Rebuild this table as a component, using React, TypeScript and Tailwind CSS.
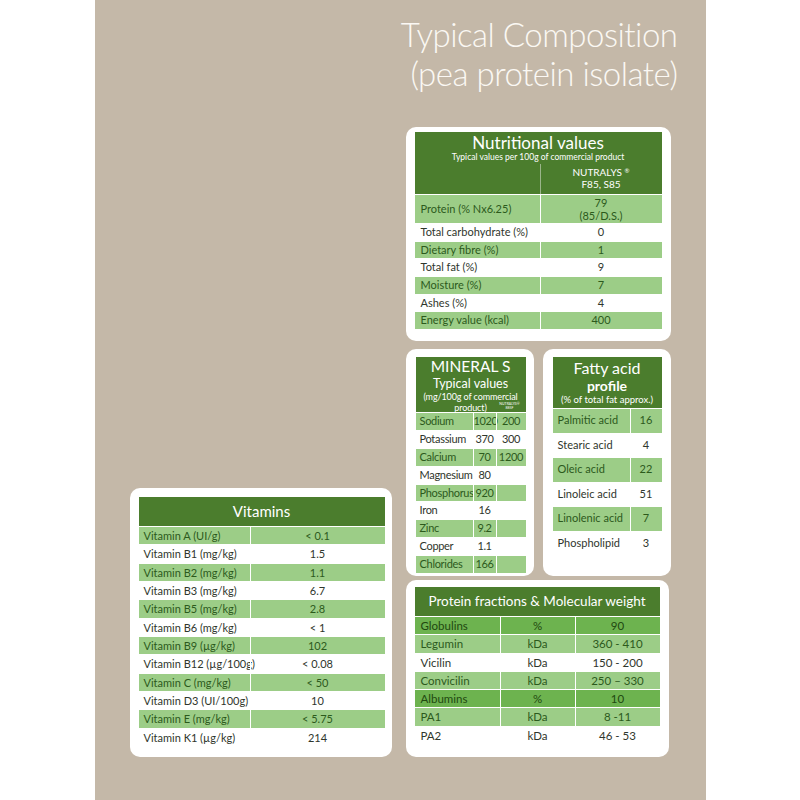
import type { ReactNode } from "react";

const font = { fontFamily: "Lato, 'Open Sans', sans-serif" };

type Shade = "light" | "mid" | "white";

const rowBg: Record<Shade, string> = {
  light: "bg-[#9ccd87] text-[#2c5a1c]",
  mid: "bg-[#6db34f] text-[#21480f]",
  white: "bg-white text-[#2f362c]",
};

const nutrition: [string, string, Shade][] = [
  ["Total carbohydrate (%)", "0", "white"],
  ["Dietary fibre (%)", "1", "light"],
  ["Total fat (%)", "9", "white"],
  ["Moisture (%)", "7", "light"],
  ["Ashes (%)", "4", "white"],
  ["Energy value (kcal)", "400", "light"],
];

const minerals: [string, string, string, Shade][] = [
  ["Sodium", "1020", "200", "light"],
  ["Potassium", "370", "300", "white"],
  ["Calcium", "70", "1200", "light"],
  ["Magnesium", "80", "", "white"],
  ["Phosphorus", "920", "", "light"],
  ["Iron", "16", "", "white"],
  ["Zinc", "9.2", "", "light"],
  ["Copper", "1.1", "", "white"],
  ["Chlorides", "166", "", "light"],
];

const fatty: [string, string, Shade][] = [
  ["Palmitic acid", "16", "light"],
  ["Stearic acid", "4", "white"],
  ["Oleic acid", "22", "light"],
  ["Linoleic acid", "51", "white"],
  ["Linolenic acid", "7", "light"],
  ["Phospholipid", "3", "white"],
];

const vitamins: [string, string, Shade][] = [
  ["Vitamin A (UI/g)", "< 0.1", "light"],
  ["Vitamin B1 (mg/kg)", "1.5", "white"],
  ["Vitamin B2 (mg/kg)", "1.1", "light"],
  ["Vitamin B3 (mg/kg)", "6.7", "white"],
  ["Vitamin B5 (mg/kg)", "2.8", "light"],
  ["Vitamin B6 (mg/kg)", "< 1", "white"],
  ["Vitamin B9 (µg/kg)", "102", "light"],
  ["Vitamin B12 (µg/100g)", "< 0.08", "white"],
  ["Vitamin C (mg/kg)", "< 50", "light"],
  ["Vitamin D3 (UI/100g)", "10", "white"],
  ["Vitamin E (mg/kg)", "< 5.75", "light"],
  ["Vitamin K1 (µg/kg)", "214", "white"],
];

const fractions: [string, string, string, Shade][] = [
  ["Globulins", "%", "90", "mid"],
  ["Legumin", "kDa", "360 - 410", "light"],
  ["Vicilin", "kDa", "150 - 200", "white"],
  ["Convicilin", "kDa", "250 – 330", "light"],
  ["Albumins", "%", "10", "mid"],
  ["PA1", "kDa", "8 -11", "light"],
  ["PA2", "kDa", "46 - 53", "white"],
];

function Card({ className, children }: { className: string; children: ReactNode }) {
  return <div className={`rounded-[10px] bg-white ${className}`}>{children}</div>;
}

function NutritionCard() {
  return (
    <Card className="h-[214px] px-[9px] pt-[5px]">
      <div className="bg-[#4b7d2d] text-white">
        <div className="pt-[1px] text-center text-[17px] leading-[20px]">Nutritional values</div>
        <div className="-mt-[1px] text-center text-[8.5px] leading-[10px]">
          Typical values per 100g of commercial product
        </div>
        <div className="mt-[2px] grid h-[30px] grid-cols-[125px_1fr]">
          <div />
          <div className="border-l border-[#9bb58a] pt-[2px] text-center text-[10px] leading-[12px]">
            NUTRALYS <sup className="text-[6px]">®</sup>
            <br />
            F85, S85
          </div>
        </div>
      </div>
      <div className="grid h-[29px] grid-cols-[125px_1fr] border-t border-white bg-[#9ccd87] text-[11px] text-[#2c5a1c]">
        <div className="flex items-center pl-[6px]">Protein (% Nx6.25)</div>
        <div className="flex flex-col items-center justify-center border-l border-white leading-[13px]">
          <span>79</span>
          <span>(85/D.S.)</span>
        </div>
      </div>
      {nutrition.map(([label, value, shade]) => (
        <div
          key={label}
          className={`grid h-[17.67px] grid-cols-[125px_1fr] border-t border-white text-[11px] leading-[16px] ${rowBg[shade]}`}
        >
          <div className="pl-[6px]">{label}</div>
          <div className="border-l border-white text-center">{value}</div>
        </div>
      ))}
    </Card>
  );
}

function MineralsCard() {
  return (
    <Card className="h-[227px] w-[128px] pl-[10px] pr-[8px] pt-[8px]">
      <div className="relative h-[55px] bg-[#4b7d2d] text-center text-white">
        <div className="text-[15.5px] leading-[19px]">MINERAL S</div>
        <div className="text-[12.5px] leading-[15px]">Typical values</div>
        <div className="text-[9px] leading-[11px] tracking-[-0.1px]">
          (mg/100g of commercial
          <br />
          product)
        </div>
        <div className="absolute bottom-[2px] right-[3px] w-[26px] text-center text-[3.5px] leading-[4px]">
          NUTRALYS®
          <br />
          885F
        </div>
      </div>
      {minerals.map(([label, a, b, shade]) => (
        <div
          key={label}
          className={`grid h-[17.9px] grid-cols-[57px_23px_1fr] border-t border-white text-[11px] leading-[16.9px] ${rowBg[shade]}`}
        >
          <div className="whitespace-nowrap pl-[4px] tracking-[-0.3px]">{label}</div>
          <div className="border-l border-white text-center tracking-[-0.4px]">{a}</div>
          <div className="border-l border-white text-center tracking-[-0.3px]">{b}</div>
        </div>
      ))}
    </Card>
  );
}

function FattyCard() {
  return (
    <Card className="h-[227px] w-[128px] pl-[10px] pr-[9px] pt-[8px]">
      <div className="h-[51px] bg-[#4b7d2d] text-center text-white">
        <div className="pt-[1px] text-[16px] leading-[19px]">Fatty acid</div>
        <div className="text-[14px] font-bold leading-[17px]">profile</div>
        <div className="text-[9.5px] leading-[12px]">(% of total fat approx.)</div>
      </div>
      {fatty.map(([label, value, shade]) => (
        <div
          key={label}
          className={`grid h-[24.5px] grid-cols-[77px_1fr] border-t border-white text-[11px] leading-[22px] ${rowBg[shade]}`}
        >
          <div className="pl-[5px]">{label}</div>
          <div className="border-l border-white text-center">{value}</div>
        </div>
      ))}
    </Card>
  );
}

function VitaminsCard() {
  return (
    <Card className="w-[262px] px-[9px] pb-[11px] pr-[7px] pt-[9px]">
      <div className="flex h-[29px] items-center justify-center bg-[#4b7d2d] text-[15px] text-white">
        Vitamins
      </div>
      {vitamins.map(([label, value, shade]) => (
        <div
          key={label}
          className={`grid h-[18.33px] grid-cols-[111px_1fr] border-t border-white text-[11px] leading-[17px] ${rowBg[shade]}`}
        >
          <div className="whitespace-nowrap pl-[5px]">{label}</div>
          <div className="border-l border-white text-center">{value}</div>
        </div>
      ))}
    </Card>
  );
}

function FractionsCard() {
  return (
    <Card className="h-[177px] w-[263px] px-[9px] pt-[7px]">
      <div className="flex h-[29px] items-center justify-center bg-[#4b7d2d] text-[13.5px] text-white">
        Protein fractions &amp; Molecular weight
      </div>
      {fractions.map(([label, unit, value, shade]) => (
        <div
          key={label}
          className={`grid h-[18.3px] grid-cols-[85px_75px_1fr] border-t border-white text-[11.5px] leading-[17px] ${rowBg[shade]}`}
        >
          <div className="pl-[6px]">{label}</div>
          <div className="border-l border-white text-center">{unit}</div>
          <div className="border-l border-white text-center">{value}</div>
        </div>
      ))}
    </Card>
  );
}

export default function App() {
  return (
    <div className="min-h-[800px] bg-white" style={font}>
      <div className="mx-auto flex h-[800px] w-[611px] flex-col bg-[#c4b8a8] px-[35px]">
        <h1 className="-mr-[7px] mt-[15px] text-right text-[33px] font-light leading-[39px] tracking-[-0.5px] text-[#fbf8f4]">
          Typical Composition
          <br />
          (pea protein isolate)
        </h1>
        <div className="mb-[43px] mt-auto flex items-end gap-[14px]">
          <VitaminsCard />
          <div className="flex w-[265px] flex-col">
            <NutritionCard />
            <div className="mt-[8px] flex gap-[9px]">
              <MineralsCard />
              <FattyCard />
            </div>
            <div className="mt-[4px]">
              <FractionsCard />
            </div>
          </div>
        </div>
      </div>
    </div>
  );
}
